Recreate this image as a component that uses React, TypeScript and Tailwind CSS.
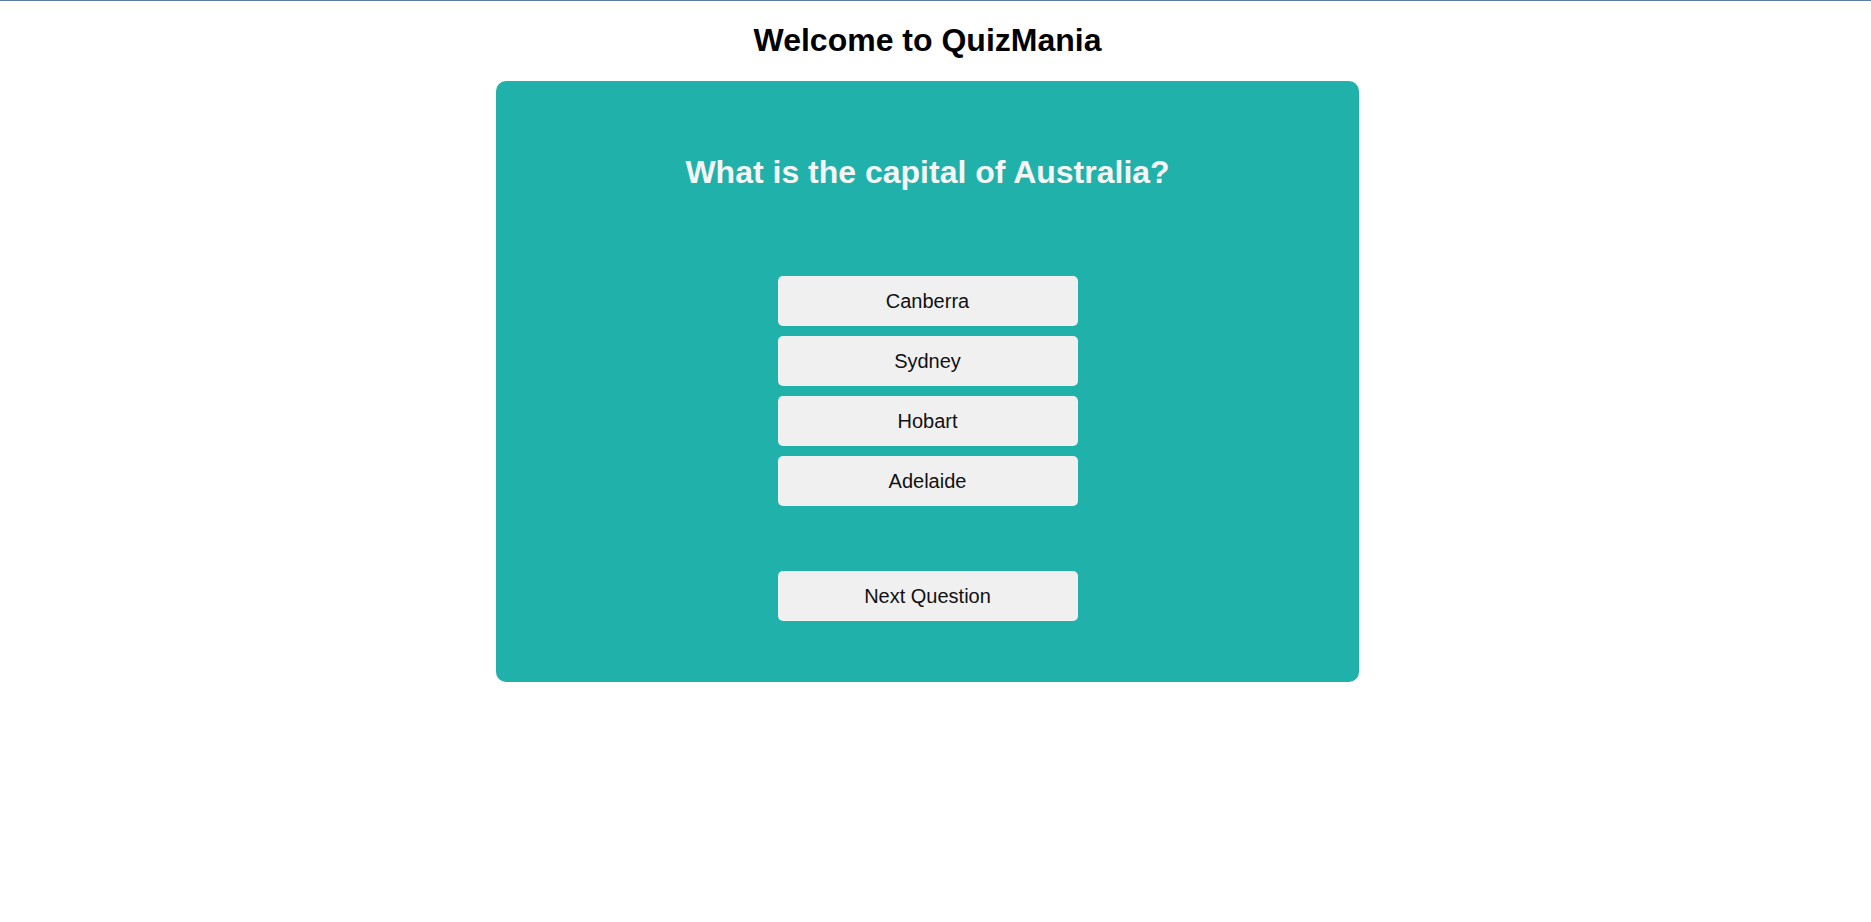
import React from "react";

const answers = ["Canberra", "Sydney", "Hobart", "Adelaide"];

export default function App() {
  return (
    <div
      className="min-h-[922px] bg-white"
      style={{ fontFamily: '"Liberation Sans", Arial, sans-serif' }}
    >
      <div className="h-px w-full bg-[#5b7fa6]" />
      <div className="flex flex-col items-center pr-[16px]">
        <h1 className="mt-[21px] text-[32px] leading-[37px] font-bold text-black">
          Welcome to QuizMania
        </h1>
        <div className="mt-[22px] flex h-[601px] w-[863px] flex-col items-center rounded-[10px] bg-[#20b2aa] pt-[73px]">
          <h2 className="text-[32px] leading-[37px] font-bold text-[#f5f5f5]">
            What is the capital of Australia?
          </h2>
          <div className="mt-[85px] flex flex-col gap-[10px]">
            {answers.map((a) => (
              <button
                key={a}
                className="h-[50px] w-[300px] rounded-[5px] bg-[#f0f0f0] text-[20px] text-[#111]"
              >
                {a}
              </button>
            ))}
          </div>
          <button className="mt-[65px] h-[50px] w-[300px] rounded-[5px] bg-[#f0f0f0] text-[20px] text-[#111]">
            Next Question
          </button>
        </div>
      </div>
    </div>
  );
}
